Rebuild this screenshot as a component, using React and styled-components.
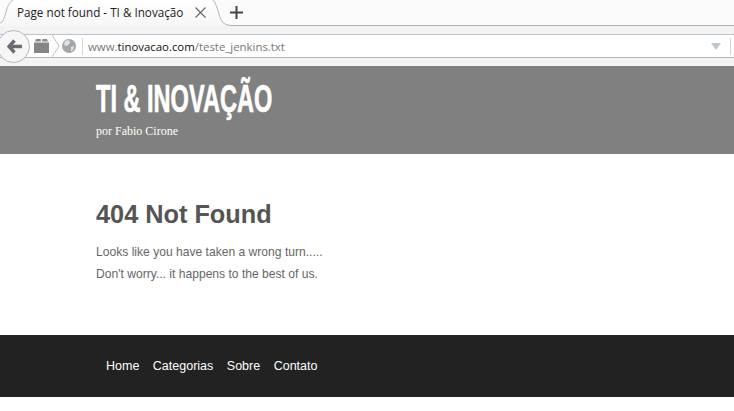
import React from "react";
import styled, { createGlobalStyle } from "styled-components";

const GlobalStyle = createGlobalStyle`
  html, body {
    margin: 0;
    padding: 0;
    background: #fff;
  }
`;

const Page = styled.div`
  width: 734px;
  height: 411px;
  overflow: hidden;
  display: flex;
  flex-direction: column;
  font-family: "Liberation Sans", Arial, sans-serif;
`;

const TabStrip = styled.div`
  height: 25px;
  background: #fbfbfb;
  border-bottom: 1px solid #a9afb5;
  display: flex;
  align-items: flex-start;
  position: relative;
`;

const Tab = styled.div`
  width: 229px;
  height: 26px;
  box-sizing: border-box;
  padding: 0 0 2px 17px;
  display: flex;
  align-items: center;
  position: relative;
  z-index: 1;
  flex: none;
`;

const TabShape = styled.svg`
  position: absolute;
  left: 0;
  top: 0;
  z-index: -1;
`;

const TabTitle = styled.span`
  font-family: "Open Sans", "Noto Sans", sans-serif;
  font-size: 11.7px;
  color: #222;
  white-space: nowrap;
  width: 178px;
`;

const NewTab = styled.div`
  margin-left: 1px;
  height: 25px;
  display: flex;
  align-items: center;
`;

const Toolbar = styled.div`
  height: 40px;
  background: #f3f3f3;
  display: flex;
  align-items: flex-start;
  position: relative;
`;

const BackCircle = styled.div`
  position: absolute;
  left: -3px;
  top: 4px;
  width: 33px;
  height: 33px;
  box-sizing: border-box;
  padding-left: 2px;
  border-radius: 50%;
  background: #f6f6f6;
  border: 1px solid #b5b8bb;
  display: flex;
  align-items: center;
  justify-content: center;
  z-index: 2;
`;

const UrlBar = styled.div`
  margin-top: 8px;
  flex: 1;
  height: 24px;
  box-sizing: border-box;
  background: #fff;
  border-top: 1px solid #bcc4cb;
  border-bottom: 1px solid #b4b8bc;
  display: flex;
  align-items: center;
  padding-left: 34px;
`;

const IconSlot = styled.div`
  display: flex;
  align-items: center;
  width: ${(p) => p.width}px;
  flex: none;
`;

const Separator = styled.div`
  width: 1px;
  height: 17px;
  background: #d5d5d5;
  flex: none;
`;

const UrlText = styled.div`
  font-family: "Open Sans", "Noto Sans", sans-serif;
  font-size: 11.4px;
  color: #777;
  white-space: nowrap;
  flex: 1;
  margin-left: 5px;

  strong {
    font-weight: 400;
    color: #111;
  }
`;

const DropArrow = styled.div`
  width: 0;
  height: 0;
  border-left: 5px solid transparent;
  border-right: 5px solid transparent;
  border-top: 7px solid #c0c6cc;
  margin-right: 9px;
`;

const EndLine = styled(Separator)`
  margin-right: 3px;
`;

const Header = styled.header`
  height: 88px;
  background: #808080;
  box-sizing: border-box;
  padding: 13px 0 0 96px;
  color: #fff;
`;

const SiteTitle = styled.h1`
  margin: 0;
  font-weight: 700;
  font-size: 38px;
  line-height: 40px;
  white-space: nowrap;
  color: #fff;
  -webkit-text-stroke: 0.7px #fff;
  transform: scaleX(0.62);
  transform-origin: left center;
`;

const Byline = styled.div`
  margin-top: 5px;
  font-family: "Liberation Serif", serif;
  font-size: 12px;
  line-height: 14px;
  color: #fff;
`;

const Main = styled.main`
  height: 181px;
  box-sizing: border-box;
  padding: 46px 0 0 96px;
  background: #fff;
`;

const Heading = styled.h2`
  margin: 0 0 13px;
  font-size: 25.3px;
  line-height: 28px;
  font-weight: 700;
  color: #555;
`;

const Line = styled.p`
  margin: 0;
  font-size: 12.1px;
  line-height: 22px;
  color: #666;
`;

const Footer = styled.footer`
  height: 62px;
  background: #222;
  display: flex;
  align-items: center;
  gap: 13.5px;
  padding-left: 106px;
`;

const FooterLink = styled.a`
  font-size: 12.5px;
  color: #fff;
  text-decoration: none;
`;

function BackArrow() {
  return (
    <svg width="15" height="15" viewBox="0 0 15 15">
      <path d="M7.5 1.5 L2 7.5 L7.5 13.5 M3 7.5 H15" fill="none" stroke="#686d73" strokeWidth="3.4" />
    </svg>
  );
}

function CloseIcon() {
  return (
    <svg width="11" height="11" viewBox="0 0 11 11">
      <path d="M0.5 0.5 L10.5 10.5 M10.5 0.5 L0.5 10.5" stroke="#666" strokeWidth="1.1" />
    </svg>
  );
}

function PlusIcon() {
  return (
    <svg width="13" height="13" viewBox="0 0 13 13">
      <path d="M6.5 0 V13 M0 6.5 H13" stroke="#444" strokeWidth="2" />
    </svg>
  );
}

function FolderIcon() {
  return (
    <svg width="15" height="14" viewBox="0 0 15 14">
      <path d="M1 2.5 L2 0 H6.5 L7 2.5 Z M8 2.5 L8.5 0 H13 L14 2.5 Z" fill="#8a8a8a" />
      <rect x="0" y="3.5" width="15" height="10.5" fill="#858585" />
    </svg>
  );
}

function Chevron() {
  return (
    <svg width="8" height="22" viewBox="0 0 8 22">
      <path d="M0 0 L7 11 L0 22" fill="none" stroke="#bcc1c6" />
    </svg>
  );
}

function Globe() {
  return (
    <svg width="14" height="14" viewBox="0 0 14 14">
      <circle cx="7" cy="7" r="7" fill="#a4a6a8" />
      <path d="M3 2 L7 1 L8 4 L5 7 L2 6 Z M9 8 L12 7 L11 11 L9 12 Z" fill="#e2e3e4" />
    </svg>
  );
}

export default function App() {
  return (
    <Page>
      <GlobalStyle />
      <TabStrip>
        <Tab>
          <TabShape width="229" height="26" viewBox="0 0 229 26">
            <defs>
              <linearGradient id="tabFill" x1="0" y1="0" x2="0" y2="1">
                <stop offset="0" stopColor="#ffffff" />
                <stop offset="1" stopColor="#f6f6f6" />
              </linearGradient>
            </defs>
            <path d="M0 26 L0 23 C3 22 4 19 6 12 C8 5 10 2 13 0 L213 0 C216 3 217 8 219 14 C221 21 224 25 229 25 L229 26 Z" fill="url(#tabFill)" />
            <path d="M0 23 C3 22 4 19 6 12 C8 5 10 2 13 0 M213 0 C216 3 217 8 219 14 C221 21 224 25 229 25" fill="none" stroke="#b0b5ba" />
          </TabShape>
          <TabTitle>Page not found - TI &amp; Inovação</TabTitle>
          <CloseIcon />
        </Tab>
        <NewTab>
          <PlusIcon />
        </NewTab>
      </TabStrip>
      <Toolbar>
        <BackCircle>
          <BackArrow />
        </BackCircle>
        <UrlBar>
          <IconSlot width={18}>
            <FolderIcon />
          </IconSlot>
          <IconSlot width={10}>
            <Chevron />
          </IconSlot>
          <IconSlot width={20}>
            <Globe />
          </IconSlot>
          <Separator />
          <UrlText>
            www.<strong>tinovacao.com</strong>/teste_jenkins.txt
          </UrlText>
          <DropArrow />
          <EndLine />
        </UrlBar>
      </Toolbar>
      <Header>
        <SiteTitle>TI &amp; INOVAÇÃO</SiteTitle>
        <Byline>por Fabio Cirone</Byline>
      </Header>
      <Main>
        <Heading>404 Not Found</Heading>
        <Line>Looks like you have taken a wrong turn.....</Line>
        <Line>Don't worry... it happens to the best of us.</Line>
      </Main>
      <Footer>
        <FooterLink href="#">Home</FooterLink>
        <FooterLink href="#">Categorias</FooterLink>
        <FooterLink href="#">Sobre</FooterLink>
        <FooterLink href="#">Contato</FooterLink>
      </Footer>
    </Page>
  );
}
